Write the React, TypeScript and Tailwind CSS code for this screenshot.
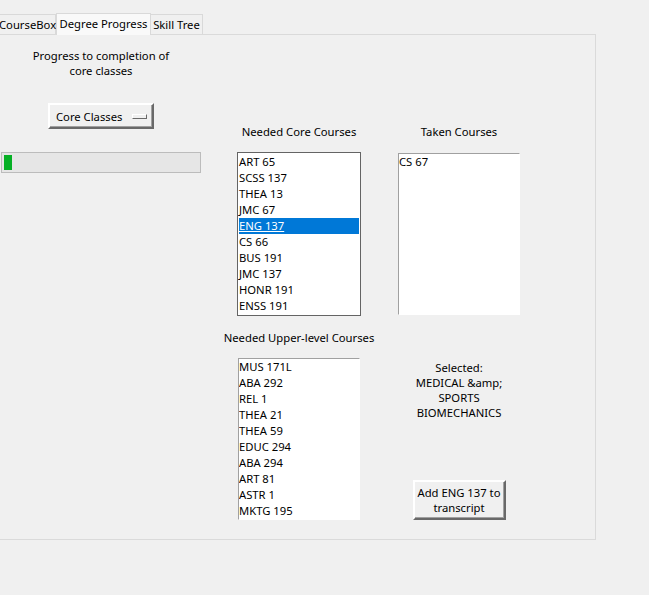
import React from 'react';

const CORE_NEEDED = [
  'ART 65',
  'SCSS 137',
  'THEA 13',
  'JMC 67',
  'ENG 137',
  'CS 66',
  'BUS 191',
  'JMC 137',
  'HONR 191',
  'ENSS 191',
];

const TAKEN = ['CS 67'];

const UPPER_NEEDED = [
  'MUS 171L',
  'ABA 292',
  'REL 1',
  'THEA 21',
  'THEA 59',
  'EDUC 294',
  'ABA 294',
  'ART 81',
  'ASTR 1',
  'MKTG 195',
];

interface ListBoxProps {
  items: string[];
  selected?: string;
  focused?: boolean;
  className: string;
}

/**
 * Tk-style listbox: plain rows, one may be highlighted
 */
function ListBox({ items, selected, focused = false, className }: ListBoxProps) {
  return (
    <div
      className={`bg-white overflow-hidden ${
        focused
          ? 'border border-[#646464] p-[1px]'
          : 'border border-t-[#a0a0a0] border-l-[#a0a0a0] border-r-white border-b-white'
      } ${className}`}
    >
      {items.map((item) => (
        <div
          key={item}
          className={`h-[16px] leading-[16px] whitespace-nowrap ${
            item === selected ? 'bg-[#0078d7] text-white underline' : ''
          }`}
        >
          {item}
        </div>
      ))}
    </div>
  );
}

function RaisedButton({ children, className }: { children: React.ReactNode; className: string }) {
  return (
    <div
      className={`bg-[#f0f0f0] border-2 border-t-white border-l-white border-r-[#696969] border-b-[#696969] shadow-[inset_-1px_-1px_0_#a0a0a0] ${className}`}
    >
      {children}
    </div>
  );
}

export default function App() {
  return (
    <div
      className="w-[649px] h-[595px] bg-[#f0f0f0] overflow-hidden text-[11.25px] leading-[15px] text-black"
      style={{ fontFamily: '"Noto Sans", "Open Sans", sans-serif' }}
    >
      {/* Tabs */}
      <div className="flex items-end h-[35px]">
        <div className="-ml-[5px] w-[61px] h-[20px] mb-[1px] pl-[3px] leading-[19px] border border-b-0 border-[#d9d9d9] bg-[#f0f0f0]">
          CourseBox
        </div>
        <div className="relative z-10 w-[95px] h-[22px] text-center leading-[20px] border border-b-0 border-[#d9d9d9] bg-[#f9f9f9]">
          Degree Progress
        </div>
        <div className="w-[52px] h-[20px] mb-[1px] text-center leading-[19px] border border-b-0 border-l-0 border-[#d9d9d9] bg-[#f0f0f0]">
          Skill Tree
        </div>
      </div>

      {/* Tab page */}
      <div className="-mt-[1px] w-[596px] h-[506px] border-t border-r border-b border-[#dadada] flex">
        {/* Left column: core progress */}
        <div className="w-[202px] flex flex-col items-center">
          <p className="mt-[13px] text-center">
            Progress to completion of
            <br />
            core classes
          </p>
          <RaisedButton className="mt-[25px] w-[106px] h-[26px] flex items-center pl-[6px] pr-[5px]">
            <span>Core Classes</span>
            <span className="ml-auto w-[15px] h-[5px] bg-[#f0f0f0] border border-t-white border-l-white border-r-[#696969] border-b-[#696969]" />
          </RaisedButton>
          <div className="mt-[23px] ml-[1px] self-start w-[200px] h-[21px] border border-[#bcbcbc] bg-[#e6e6e6] p-[2px]">
            <div className="w-[8px] h-full bg-[#06b025]" />
          </div>
        </div>

        {/* Middle column: needed courses */}
        <div className="ml-[22px] w-[150px] flex flex-col items-center">
          <p className="mt-[89px] text-center whitespace-nowrap">Needed Core Courses</p>
          <ListBox
            items={CORE_NEEDED}
            selected="ENG 137"
            focused
            className="mt-[13px] w-[124px] h-[164px]"
          />
          <p className="mt-[14px] text-center whitespace-nowrap">Needed Upper-level Courses</p>
          <ListBox items={UPPER_NEEDED} className="mt-[13px] w-[122px] h-[162px]" />
        </div>

        {/* Right column: taken courses + actions */}
        <div className="w-[170px] flex flex-col items-center">
          <p className="mt-[89px] text-center whitespace-nowrap">Taken Courses</p>
          <ListBox items={TAKEN} className="mt-[14px] w-[122px] h-[162px]" />
          <p className="mt-[45px] text-center">
            Selected:
            <br />
            {'MEDICAL &amp;'}
            <br />
            SPORTS
            <br />
            BIOMECHANICS
          </p>
          <RaisedButton className="mt-[60px] w-[93px] h-[40px] flex items-center justify-center text-center">
            <span>
              Add ENG 137 to
              <br />
              transcript
            </span>
          </RaisedButton>
        </div>
      </div>
    </div>
  );
}
